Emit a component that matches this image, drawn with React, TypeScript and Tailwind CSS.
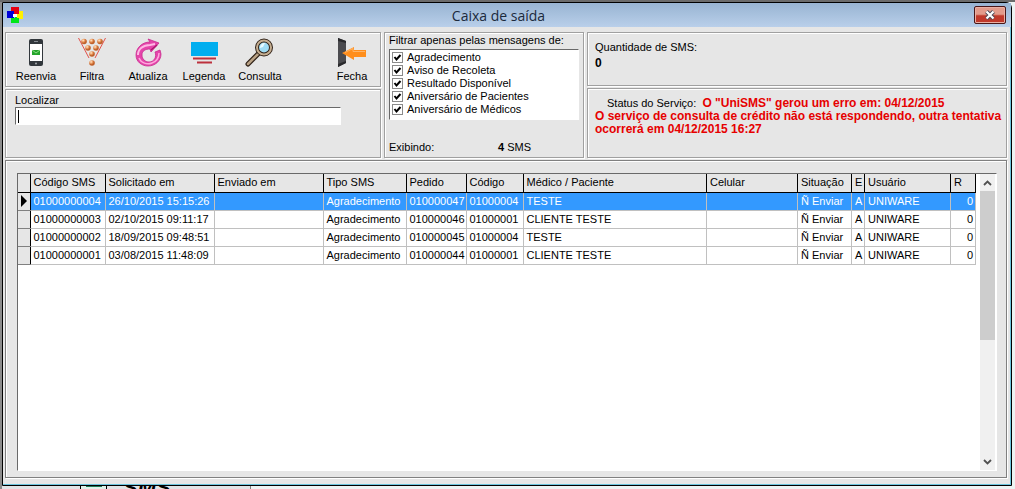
import React from 'react';
import type { ReactNode } from 'react';

const bevel = 'border border-[#a0a0a0] shadow-[inset_1px_1px_0_#fff,1px_1px_0_#fff]';
const sunken = 'border border-t-[#696969] border-r-white border-b-white border-l-[#696969] bg-white';

const columns = [
  { label: 'Código SMS', width: 'w-[75px]' },
  { label: 'Solicitado em', width: 'w-[109px]' },
  { label: 'Enviado em', width: 'w-[109px]' },
  { label: 'Tipo SMS', width: 'w-[83px]' },
  { label: 'Pedido', width: 'w-[60px]' },
  { label: 'Código', width: 'w-[57px]' },
  { label: 'Médico / Paciente', width: '' },
  { label: 'Celular', width: 'w-[91px]' },
  { label: 'Situação', width: 'w-[54px]' },
  { label: 'E', width: 'w-[13px]' },
  { label: 'Usuário', width: 'w-[86px]' },
  { label: 'R', width: 'w-[25px]' },
];

const rows = [
  ['01000000004', '26/10/2015 15:15:26', '', 'Agradecimento', '010000047', '01000004', 'TESTE', '', 'Ñ Enviar', 'A', 'UNIWARE', '0'],
  ['01000000003', '02/10/2015 09:11:17', '', 'Agradecimento', '010000046', '01000001', 'CLIENTE TESTE', '', 'Ñ Enviar', 'A', 'UNIWARE', '0'],
  ['01000000002', '18/09/2015 09:48:51', '', 'Agradecimento', '010000045', '01000004', 'TESTE', '', 'Ñ Enviar', 'A', 'UNIWARE', '0'],
  ['01000000001', '03/08/2015 11:48:09', '', 'Agradecimento', '010000044', '01000001', 'CLIENTE TESTE', '', 'Ñ Enviar', 'A', 'UNIWARE', '0'],
];

const filters = [
  'Agradecimento',
  'Aviso de Recoleta',
  'Resultado Disponível',
  'Aniversário de Pacientes',
  'Aniversário de Médicos',
];

const PhoneIcon = () => (
  <svg width="30" height="30" viewBox="0 0 30 30" aria-hidden="true">
    <rect x="8" y="1" width="14" height="27" rx="2" fill="#32373c" />
    <rect x="9" y="6" width="12" height="17" fill="#fff" />
    <rect x="11" y="12" width="8" height="5" fill="#25a52b" />
    <path d="M11 12l4 3 4-3" stroke="#8ddc86" fill="none" />
    <circle cx="15" cy="25.5" r="1" fill="#a5a9ad" />
    <path d="M13 3.5h4" stroke="#858a90" />
  </svg>
);

const balls = [[7, 3.5], [15, 3.5], [23, 3.5], [11, 10], [19, 10], [15, 16], [15, 25]];

const FilterIcon = () => (
  <svg width="30" height="30" viewBox="0 0 30 30" aria-hidden="true">
    <defs>
      <radialGradient id="ball" cx="35%" cy="30%">
        <stop offset="0" stopColor="#ffe9d0" />
        <stop offset="0.5" stopColor="#eea066" />
        <stop offset="1" stopColor="#c0602a" />
      </radialGradient>
    </defs>
    <path d="M1.5 0L12 20M28.500 0L18 20" stroke="#e2504a" fill="none" />
    {balls.map(([x, y]) => (
      <circle key={`${x}-${y}`} cx={x} cy={y} r="2.8" fill="url(#ball)" />
    ))}
  </svg>
);

const RefreshIcon = () => (
  <svg width="30" height="30" viewBox="0 0 30 30" aria-hidden="true">
    <path
      d="M17 4C9 4 3 10 3 17c0 7 6 11 12 11 7 0 13-5 13-12l-1-4-5 2c2 5-1 10-6 10-4 0-7-3-7-7 0-4 3-6 8-6l1 3 8-9-11-4z"
      fill="#e545ab"
      stroke="#c92a8d"
      strokeWidth="0.8"
    />
    <path d="M5 17c0-6 5-10 12-10l5-1" stroke="#ffb8e4" strokeWidth="2" fill="none" />
    <path d="M6 20c2 5 8 7 13 5 4-1 7-5 7-10" stroke="#ffa6dc" strokeWidth="1.500" fill="none" />
    <path d="M18 12l6-5" stroke="#b0156f" strokeWidth="1.5" />
  </svg>
);

const LegendIcon = () => (
  <svg width="30" height="30" viewBox="0 0 30 30" aria-hidden="true">
    <path d="M2 4h27v14H2z" fill="#00aeef" />
    <path d="M4 20.5h23" stroke="#bd303d" strokeWidth="2" />
    <path d="M8 24.5h15" stroke="#bd303d" strokeWidth="2" />
  </svg>
);

const MagnifierIcon = () => (
  <svg width="30" height="30" viewBox="0 0 30 30" aria-hidden="true">
    <path d="M3 26L14 15" stroke="#2f2117" strokeWidth="5" strokeLinecap="round" />
    <path d="M3 26L14 15" stroke="#b9a184" strokeWidth="2.5" strokeLinecap="round" />
    <circle cx="19" cy="9.5" r="7" fill="#9fdcf4" stroke="#2f2117" strokeWidth="4" />
    <circle cx="19" cy="9.5" r="7" fill="none" stroke="#c5ae91" strokeWidth="2" />
    <path d="M15 10c0-3 2-5 5-5l-2 4z" fill="#e8faff" />
  </svg>
);

const DoorIcon = () => (
  <svg width="30" height="30" viewBox="0 0 30 30" aria-hidden="true">
    <path d="M1 0l8 3v22l-8 4z" fill="#4b4b4f" />
    <path d="M1 0l8 3v2L1 3zM1 26l8-3v2l-8 4z" fill="#29292c" />
    <path d="M5 15l12-6v3h12v7H17v3z" fill="#ff8e1c" />
    <path d="M8 14.5l8-4v3h12" stroke="#ffb567" fill="none" />
  </svg>
);

const ToolButton = ({ label, width, children }: { label: string; width: string; children: ReactNode }) => (
  <button type="button" className={`flex flex-col items-center ${width}`}>
    {children}
    <span className="mt-0.5">{label}</span>
  </button>
);

const TitleBar = () => (
  <header className="flex h-6 items-center bg-linear-to-b from-[#98b4d2] to-[#b9cfea] pr-[5px] pl-1">
    <svg width="16" height="16" viewBox="0 0 16 16" aria-hidden="true">
      <path d="M4 0h8v5H4z" fill="#e60012" />
      <path d="M0 4h7v7H0z" fill="#0000d8" />
      <path d="M9 4h7v8H9z" fill="#fff000" />
      <path d="M4 11h8v5H4z" fill="#00e619" />
      <path d="M7 4h5v3H7z" fill="#e60012" />
      <path d="M4 11h4V9h2v3H4z" fill="#00e619" />
      <path d="M6 7h4v3H6z" fill="#fff" />
    </svg>
    <h1 className="flex-1 text-center font-['Open_Sans',sans-serif] text-[14px] text-[#1b2a3c]">Caixa de saída</h1>
    <button
      type="button"
      aria-label="Fechar janela"
      className="flex h-[18px] w-8 items-center justify-center rounded-xs border border-[#4a1717] bg-linear-to-b from-[#e39b8b] from-45% to-[#c0392b] to-55% shadow-[inset_0_0_0_1px_#eab0a4]"
    >
      <svg width="12" height="10" viewBox="0 0 12 10" aria-hidden="true">
        <path d="M2.5 1.5l7 7M9.5 1.5l-7 7" stroke="#4b4b59" strokeWidth="4" />
        <path d="M2.5 1.5l7 7M9.5 1.5l-7 7" stroke="#fff" strokeWidth="2.2" />
      </svg>
    </button>
  </header>
);

const Toolbar = () => (
  <div className={`flex h-[55px] items-start pt-[5px] pr-1 pl-0.5 ${bevel}`}>
    <ToolButton label="Reenvia" width="w-14"><PhoneIcon /></ToolButton>
    <ToolButton label="Filtra" width="w-14"><FilterIcon /></ToolButton>
    <ToolButton label="Atualiza" width="w-14"><RefreshIcon /></ToolButton>
    <ToolButton label="Legenda" width="w-14"><LegendIcon /></ToolButton>
    <ToolButton label="Consulta" width="w-14"><MagnifierIcon /></ToolButton>
    <div className="flex-1" />
    <ToolButton label="Fecha" width="w-12"><DoorIcon /></ToolButton>
  </div>
);

const MessageTable = () => (
  <div className={`flex flex-1 ${sunken}`}>
    <div className="min-w-0 flex-1 pr-1">
      <table className="w-full table-fixed border-collapse whitespace-nowrap">
        <colgroup>
          <col className="w-3" />
          {columns.map((column, index) => (
            <col key={index} className={column.width} />
          ))}
        </colgroup>
        <thead>
          <tr className="h-[18px]">
            <th className="border-r border-b border-black bg-[#e6e6e6]" />
            {columns.map((column, index) => (
              <th key={index} className="border-r border-b border-black bg-[#e6e6e6] p-0 pl-[3px] text-left font-normal">
                {column.label}
              </th>
            ))}
          </tr>
        </thead>
        <tbody>
          {rows.map((row, rowIndex) => (
            <tr key={row[0]} className={rowIndex === 0 ? 'h-[18px] bg-[#3399ff] text-white' : 'h-[18px]'}>
              <td className="border-r border-b border-r-black border-b-[#808080] bg-[#e6e6e6] p-0">
                {rowIndex === 0 && (
                  <svg width="7" height="12" viewBox="0 0 7 12" className="ml-0.5" aria-hidden="true">
                    <path d="M1 0l6 6-6 6z" fill="#000" />
                  </svg>
                )}
              </td>
              {row.map((cell, index) => (
                <td
                  key={index}
                  className={`border-r border-b border-[#c0c0c0] p-0 ${index === row.length - 1 ? 'pr-0.5 text-right' : 'pl-[3px]'}`}
                >
                  {cell}
                </td>
              ))}
            </tr>
          ))}
        </tbody>
      </table>
    </div>
    <div className="mr-px flex w-[15px] flex-col bg-[#f0f0f0]">
      <button type="button" aria-label="Rolar para cima" className="flex h-[17px] items-center justify-center">
        <svg width="9" height="6" viewBox="0 0 9 6" aria-hidden="true">
          <path d="M1 5l3.5-3.5L8 5" stroke="#505050" strokeWidth="1.8" fill="none" />
        </svg>
      </button>
      <div className="flex flex-1 flex-col">
        <div className="basis-[57%] bg-[#cdcdcd]" />
      </div>
      <button type="button" aria-label="Rolar para baixo" className="flex h-[17px] items-center justify-center">
        <svg width="9" height="6" viewBox="0 0 9 6" aria-hidden="true">
          <path d="M1 1l3.5 3.5L8 1" stroke="#505050" strokeWidth="1.8" fill="none" />
        </svg>
      </button>
    </div>
  </div>
);

const App = () => {
  return (
    <div className="flex min-h-screen flex-col bg-[#eef3f3] font-['Liberation_Sans',Arial,sans-serif] text-[11px] leading-[13px] text-black">
      <div className="h-0.5 bg-[#6b6b6b]" />
      <div className="flex flex-1 border-l-2 border-[#8c8c8c] pr-[3px]">
        <main className="flex flex-1 flex-col rounded-tr-md border border-black bg-[#e6e6e6] shadow-[inset_-1px_-1px_0_#6cc4dc]">
          <TitleBar />
          <div className="flex flex-1 flex-col gap-0.5 pt-[5px] pr-1 pb-[7px] pl-0.5">
            <div className="flex gap-[3px]">
              <div className="flex w-[376px] flex-col gap-0.5">
                <Toolbar />
                <div className={`flex-1 px-[9px] pt-1 ${bevel}`}>
                  <label htmlFor="search" className="block">Localizar</label>
                  <div className="relative">
                    <input
                      id="search"
                      type="text"
                      className={`block h-[18px] w-[326px] px-0.5 caret-transparent outline-none ${sunken}`}
                    />
                    <span className="absolute top-[3px] left-[3px] h-[13px] w-px bg-black" aria-hidden="true" />
                  </div>
                </div>
              </div>

              <fieldset className={`flex w-[200px] flex-col pt-px pr-1 pl-1 ${bevel}`}>
                <div>Filtrar apenas pelas mensagens de:</div>
                <div className={`mt-0.5 pt-px pb-[3px] pl-0.5 ${sunken}`}>
                  {filters.map((filter) => (
                    <label key={filter} className="flex h-[13px] items-center gap-1">
                      <input type="checkbox" defaultChecked className="peer sr-only" />
                      <svg width="11" height="11" viewBox="0 0 11 11" className="peer-checked:[&_path]:visible" aria-hidden="true">
                        <rect x="0.5" y="0.5" width="10" height="10" fill="#fff" stroke="#8a8a8a" />
                        <path d="M2.5 5l2 2.500 4-4.500" stroke="#000" strokeWidth="2" fill="none" className="invisible" />
                      </svg>
                      {filter}
                    </label>
                  ))}
                </div>
                <div className="mt-auto flex pb-[3px]">
                  <span className="w-[109px]">Exibindo:</span>
                  <span><b>4</b> SMS</span>
                </div>
              </fieldset>

              <div className="flex min-w-0 flex-1 flex-col gap-0.5">
                <div className={`h-[54px] px-[7px] pt-2 ${bevel}`}>
                  <div>Quantidade de SMS:</div>
                  <div className="mt-[3px] text-[12px] font-bold">0</div>
                </div>
                <div className={`min-h-[70px] flex-1 pt-2 pl-[7px] ${bevel}`}>
                  <p className="pl-3">
                    Status do Serviço:&nbsp; <b className="text-[12px] text-[#e60000]">O "UniSMS" gerou um erro em: 04/12/2015</b>
                  </p>
                  <p className="text-[12px] font-bold text-[#e60000]">
                    O serviço de consulta de crédito não está respondendo, outra tentativa ocorrerá em 04/12/2015 16:27
                  </p>
                </div>
              </div>
            </div>

            <section className="flex flex-1 flex-col border border-[#808080] pt-3 pr-[9px] pb-1.5 pl-[11px] shadow-[inset_1px_1px_0_#fff,1px_1px_0_#fff]">
              <MessageTable />
            </section>
          </div>
        </main>
      </div>
      <div className="flex h-[3px] overflow-hidden border-l-2 border-[#8c8c8c]">
        <div className="w-[78px] bg-[#e2e4e6]" />
        <div className="flex w-[27px] items-start justify-center border-x border-black bg-[#dff2ea]">
          <div className="h-px w-4 bg-[#1f7a55]" />
        </div>
        <div className="flex w-[144px] items-center border-r border-[#808080] bg-[#e2e4e6] pl-4 text-[22px] leading-none font-bold italic">SMS</div>
      </div>
    </div>
  );
};

export default App;
